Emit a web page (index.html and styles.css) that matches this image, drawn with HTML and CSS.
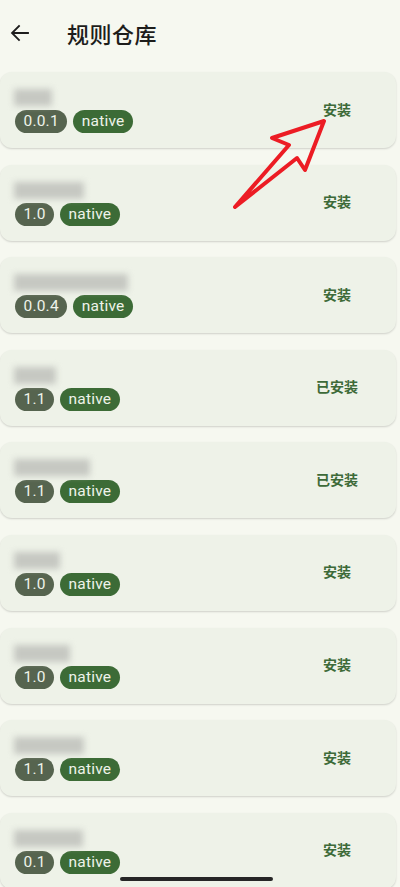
FILE: index.html
```html
<!DOCTYPE html>
<html lang="zh">
<head>
<meta charset="utf-8">
<link rel="stylesheet" href="styles.css">
</head>
<body>
<div class="app">
  <header class="topbar">
    <svg class="back" width="24" height="24" viewBox="0 0 24 24"><path d="M20 12H5M11 5l-7 7 7 7" fill="none" stroke="#1d1d1d" stroke-width="1.8" stroke-linecap="square"/></svg>
    <h1 class="title">规则仓库</h1>
  </header>
  <main class="list">
    <div class="card"><div class="info"><div class="name" style="width:38px"></div><div class="chips"><span class="chip ver">0.0.1</span><span class="chip tag">native</span></div></div><div class="action">安装</div></div>
    <div class="card"><div class="info"><div class="name" style="width:70px"></div><div class="chips"><span class="chip ver">1.0</span><span class="chip tag">native</span></div></div><div class="action">安装</div></div>
    <div class="card"><div class="info"><div class="name" style="width:114px"></div><div class="chips"><span class="chip ver">0.0.4</span><span class="chip tag">native</span></div></div><div class="action">安装</div></div>
    <div class="card"><div class="info"><div class="name" style="width:42px"></div><div class="chips"><span class="chip ver">1.1</span><span class="chip tag">native</span></div></div><div class="action">已安装</div></div>
    <div class="card"><div class="info"><div class="name" style="width:76px"></div><div class="chips"><span class="chip ver">1.1</span><span class="chip tag">native</span></div></div><div class="action">已安装</div></div>
    <div class="card"><div class="info"><div class="name" style="width:46px"></div><div class="chips"><span class="chip ver">1.0</span><span class="chip tag">native</span></div></div><div class="action">安装</div></div>
    <div class="card"><div class="info"><div class="name" style="width:56px"></div><div class="chips"><span class="chip ver">1.0</span><span class="chip tag">native</span></div></div><div class="action">安装</div></div>
    <div class="card"><div class="info"><div class="name" style="width:70px"></div><div class="chips"><span class="chip ver">1.1</span><span class="chip tag">native</span></div></div><div class="action">安装</div></div>
    <div class="card"><div class="info"><div class="name" style="width:69px"></div><div class="chips"><span class="chip ver">0.1</span><span class="chip tag">native</span></div></div><div class="action">安装</div></div>
  </main>
  <svg class="arrow" width="400" height="887" viewBox="0 0 400 887"><polygon points="324,121 272,138 289,145 235,207 297,158 305,170" fill="none" stroke="#ec1c24" stroke-width="4" stroke-linejoin="round"/></svg>
  <div class="homebar"></div>
</div>
</body>
</html>
```
FILE: styles.css
```css
html, body {
  margin: 0;
  padding: 0;
}
body {
  background: #f6f8f0;
  font-family: Roboto, "Noto Sans", "Noto Sans CJK SC", sans-serif;
  width: 400px;
  height: 887px;
  overflow: hidden;
}
.app {
  position: relative;
  width: 400px;
  height: 887px;
  overflow: hidden;
}
.topbar {
  height: 72px;
  display: flex;
  align-items: center;
  padding-left: 8px;
  box-sizing: border-box;
  padding-bottom: 6px;
}
.back {
  width: 24px;
  height: 24px;
}
.title {
  margin: 0 0 0 35px;
  font-family: "Noto Sans CJK SC", sans-serif;
  font-size: 22px;
  font-weight: 500;
  color: #1d1d1b;
  letter-spacing: 0.5px;
}
.list {
  display: flex;
  flex-direction: column;
  gap: 16.6px;
}
.card {
  width: 396px;
  height: 76px;
  box-sizing: border-box;
  background: #eef2e8;
  border-radius: 12px;
  box-shadow: 0 1px 2px rgba(0, 0, 0, 0.16);
  display: flex;
  align-items: center;
  justify-content: space-between;
  padding: 0 24px 0 14px;
}
.info {
  display: flex;
  flex-direction: column;
  gap: 4px;
  padding-top: 2px;
}
.name {
  height: 17px;
  background: #c6c8c2;
  filter: blur(3px);
}
.chips {
  display: flex;
  gap: 6px;
  padding-left: 1px;
}
.chip {
  height: 23px;
  line-height: 23px;
  border-radius: 12px;
  padding: 0 8.5px;
  font-size: 15.5px;
  font-weight: 400;
  color: #eef3ea;
  letter-spacing: 0.2px;
}
.ver {
  background: #56644f;
}
.tag {
  background: #3c6b36;
}
.action {
  width: 70px;
  text-align: center;
  font-family: "Noto Sans CJK SC", sans-serif;
  font-size: 14px;
  font-weight: 600;
  color: #3d6a38;
  margin-bottom: 3px;
}
.arrow {
  position: absolute;
  left: 0;
  top: 0;
  pointer-events: none;
}
.homebar {
  position: absolute;
  left: 120px;
  top: 877px;
  width: 153px;
  height: 4px;
  border-radius: 2px;
  background: #262626;
}
```
